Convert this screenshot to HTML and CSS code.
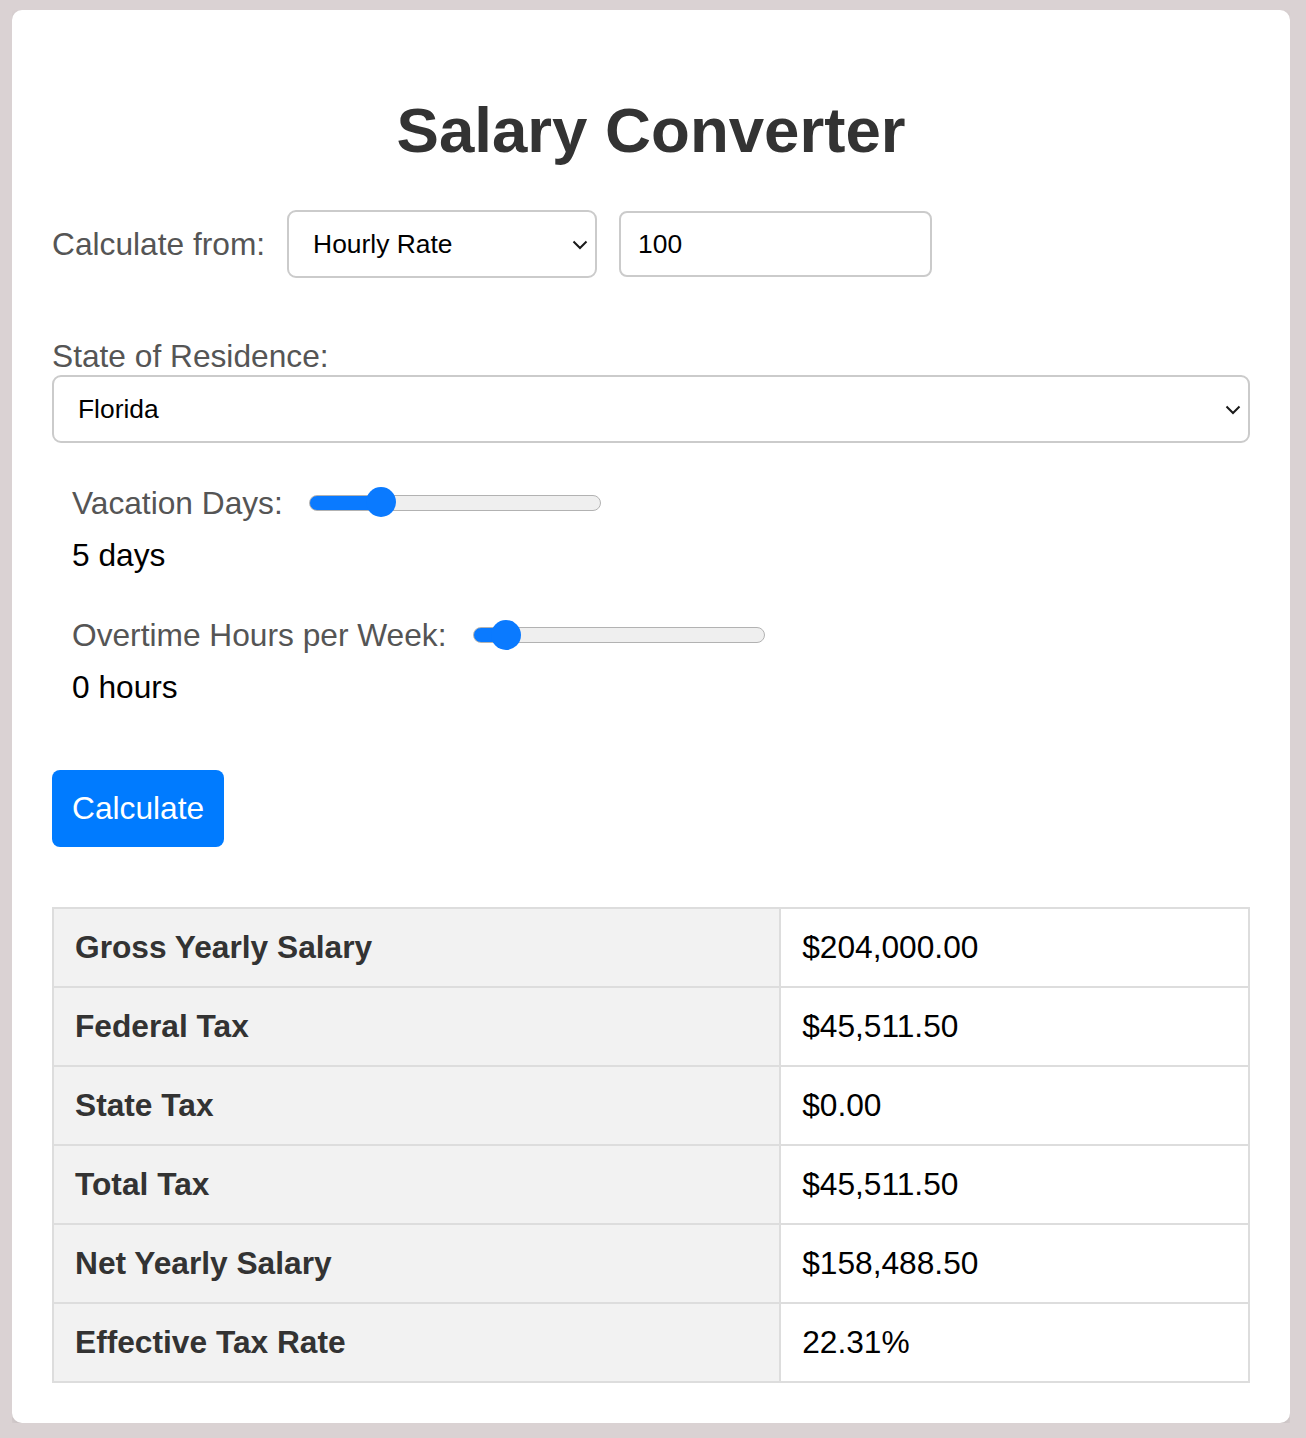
FILE: index.html
```html
<!DOCTYPE html>
<html lang="en">
<head>
<meta charset="utf-8">
<title>Salary Converter</title>
<link rel="stylesheet" href="styles.css">
</head>
<body>
<div class="card">
  <h1 class="title">Salary Converter</h1>

  <div class="calc-row">
    <label class="label" for="mode">Calculate from:</label>
    <div class="select-wrap select-small">
      <select id="mode" class="select">
        <option>Hourly Rate</option>
        <option>Yearly Salary</option>
      </select>
      <svg class="chev" width="16" height="10" viewBox="0 0 16 10"><path d="M1.5 1.5 L8 8 L14.5 1.5" fill="none" stroke="#1a1a1a" stroke-width="2"/></svg>
    </div>
    <input class="text-input" type="text" value="100">
  </div>

  <div class="state-group">
    <label class="label block" for="state">State of Residence:</label>
    <div class="select-wrap select-full">
      <select id="state" class="select">
        <option>Florida</option>
      </select>
      <svg class="chev" width="16" height="10" viewBox="0 0 16 10"><path d="M1.5 1.5 L8 8 L14.5 1.5" fill="none" stroke="#1a1a1a" stroke-width="2"/></svg>
    </div>
  </div>

  <div class="slider-group">
    <div class="slider-row">
      <label class="label">Vacation Days:</label>
      <input class="range" type="range" min="0" max="23" value="5" style="--p: 24.7%">
    </div>
    <div class="slider-value">5 days</div>
  </div>

  <div class="slider-group">
    <div class="slider-row">
      <label class="label">Overtime Hours per Week:</label>
      <input class="range" type="range" min="0" max="29" value="2" style="--p: 11.3%">
    </div>
    <div class="slider-value">0 hours</div>
  </div>

  <button class="btn" type="button">Calculate</button>

  <table class="results">
    <tr><th>Gross Yearly Salary</th><td>$204,000.00</td></tr>
    <tr><th>Federal Tax</th><td>$45,511.50</td></tr>
    <tr><th>State Tax</th><td>$0.00</td></tr>
    <tr><th>Total Tax</th><td>$45,511.50</td></tr>
    <tr><th>Net Yearly Salary</th><td>$158,488.50</td></tr>
    <tr><th>Effective Tax Rate</th><td>22.31%</td></tr>
  </table>
</div>
</body>
</html>
```

FILE: styles.css
```css
html, body {
  padding: 0;
}
body {
  margin: 10px 16px 15px 12px;
  background: #dad2d3;
  font-family: "Liberation Sans", Arial, Helvetica, sans-serif;
  font-size: 31.7px;
  line-height: 36.5px;
  color: #000;
}
.card {
  background: #fff;
  border-radius: 10px;
  padding: 40px;
  box-shadow: 0 4px 10px rgba(0, 0, 0, 0.1);
}
.title {
  margin: 43px 0 44px;
  font-size: 63.6px;
  line-height: 73px;
  font-weight: bold;
  text-align: center;
  color: #333;
}
.label {
  color: #555;
}
.label.block {
  display: block;
}
.calc-row {
  display: flex;
  align-items: center;
  gap: 22px;
  margin-bottom: 60px;
}
.select-wrap {
  position: relative;
}
.select {
  -webkit-appearance: none;
  appearance: none;
  display: block;
  box-sizing: border-box;
  width: 100%;
  height: 68px;
  border: 2px solid #cbcbcb;
  border-radius: 9px;
  background: #fff;
  padding: 0 50px 0 24px;
  font-family: "Liberation Sans", Arial, Helvetica, sans-serif;
  font-size: 26.4px;
  color: #000;
}
.select-small {
  width: 310px;
}
.select-full {
  width: 100%;
}
.chev {
  position: absolute;
  right: 9px;
  top: 50%;
  margin-top: -4px;
  pointer-events: none;
}
.text-input {
  box-sizing: border-box;
  width: 313px;
  height: 66px;
  margin: 0;
  border: 2px solid #cbcbcb;
  border-radius: 8px;
  padding: 0 17px;
  font-family: "Liberation Sans", Arial, Helvetica, sans-serif;
  font-size: 26.4px;
  color: #000;
  outline: none;
}
.state-group {
  margin-bottom: 42px;
}
.slider-group {
  padding: 0 20px;
  margin-bottom: 44px;
}
.slider-row {
  display: flex;
  align-items: center;
  gap: 26px;
  height: 36.5px;
}
.slider-value {
  margin-top: 15.5px;
  color: #000;
}
.range {
  -webkit-appearance: none;
  appearance: none;
  width: 292px;
  height: 30px;
  margin: 0;
  padding: 0;
  background: transparent;
}
.range:focus {
  outline: none;
}
.range::-webkit-slider-runnable-track {
  box-sizing: border-box;
  height: 16px;
  border: 1.5px solid #b2b2b2;
  border-radius: 8px;
  background: linear-gradient(to right, #0a7aff var(--p), #efefef var(--p));
}
.range::-webkit-slider-thumb {
  -webkit-appearance: none;
  appearance: none;
  width: 30px;
  height: 30px;
  margin-top: -8.5px;
  border: none;
  border-radius: 50%;
  background: #0a7aff;
}
.btn {
  display: block;
  margin: 64px 0 60px;
  height: 77px;
  padding: 0 20px;
  border: none;
  border-radius: 8px;
  background: #007bff;
  color: #fff;
  font-family: "Liberation Sans", Arial, Helvetica, sans-serif;
  font-size: 31.7px;
}
.results {
  width: 100%;
  border-collapse: collapse;
  border: 2px solid #ddd;
}
.results th,
.results td {
  border: 2px solid #ddd;
  padding: 20px 21px;
  line-height: 37px;
  text-align: left;
  vertical-align: middle;
}
.results th {
  width: 60.8%;
  background: #f2f2f2;
  color: #333;
  font-weight: bold;
}
.results td {
  color: #000;
  font-weight: normal;
}
```
